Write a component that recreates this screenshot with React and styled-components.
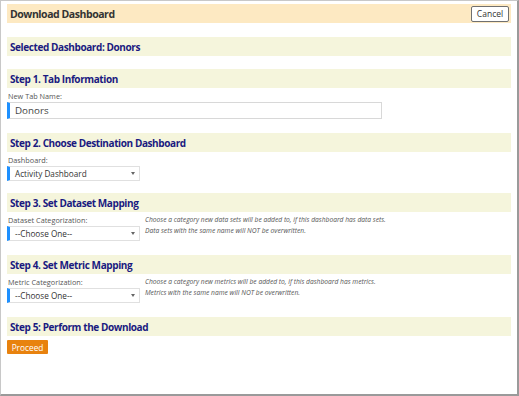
import React from 'react';
import styled, { createGlobalStyle } from 'styled-components';

const GlobalStyle = createGlobalStyle`
	html, body {
		margin: 0;
		padding: 0;
		background: #ffffff;
	}
	body {
		font-family: "Open Sans", "Noto Sans", sans-serif;
	}
`;

const Dialog = styled.div`
	box-sizing: border-box;
	width: 519px;
	height: 396px;
	padding: 3px 6px 0 6px;
	border: 1px solid #c8c8c8;
	border-right: 2px solid #9a9a9a;
	border-bottom: 2px solid #9a9a9a;
	background: #ffffff;
	display: flex;
	flex-direction: column;
`;

const Header = styled.div`
	height: 19px;
	background: #fde9c2;
	display: flex;
	align-items: center;
	justify-content: space-between;
	padding: 0 2px 0 3px;
`;

const Title = styled.div`
	font-size: 10.5px;
	font-weight: 700;
	letter-spacing: -0.45px;
	color: #333333;
`;

const CancelButton = styled.button`
	box-sizing: border-box;
	height: 16px;
	width: 38px;
	padding: 0;
	border: 1px solid #707070;
	border-radius: 2px;
	background: #ffffff;
	font-family: inherit;
	font-size: 8.5px;
	color: #333333;
`;

const Band = styled.div`
	height: 19px;
	margin-top: ${p => p.gap}px;
	background: #f5f5dc;
	display: flex;
	align-items: center;
	padding-left: 3px;
	font-size: 10px;
	font-weight: 700;
	letter-spacing: -0.4px;
	color: #1a1a80;
`;

const Label = styled.div`
	margin-top: 3px;
	font-size: 7.3px;
	color: #555555;
	line-height: 10px;
	padding-left: 1px;
`;

const TextInput = styled.input`
	box-sizing: border-box;
	width: 375px;
	height: 17px;
	margin-top: 1px;
	border: 1px solid #d8d8d8;
	border-left: 3px solid #1e90ff;
	padding: 0 5px;
	font-family: inherit;
	font-size: 9.8px;
	color: #444444;
	outline: none;
`;

const FieldRow = styled.div`
	display: flex;
	align-items: flex-start;
	gap: 5px;
`;

const FieldColumn = styled.div`
	display: flex;
	flex-direction: column;
	gap: 1px;
`;

const Select = styled.div`
	box-sizing: border-box;
	width: 133px;
	height: 15px;
	border: 1px solid #e0e0e0;
	border-left: 3px solid #1e90ff;
	display: flex;
	align-items: center;
	justify-content: space-between;
	padding: 0 4px 0 5px;
	font-size: 8.2px;
	color: #333333;
`;

const Caret = styled.span`
	width: 0;
	height: 0;
	border-left: 2.5px solid transparent;
	border-right: 2.5px solid transparent;
	border-top: 3px solid #666666;
`;

const Hint = styled.div`
	margin-top: 2px;
	font-size: 6.7px;
	font-style: italic;
	color: #555555;
	line-height: 11px;
`;

const ProceedButton = styled.button`
	align-self: flex-start;
	margin-top: 4px;
	height: 14px;
	width: 41px;
	padding: 0;
	border: none;
	border-radius: 1px;
	background: #e8820e;
	color: #ffffff;
	font-family: inherit;
	font-size: 8.3px;
`;

function SelectField({ label, value }) {
	return (
		<FieldColumn>
			<Label>{label}</Label>
			<Select>
				{value}
				<Caret />
			</Select>
		</FieldColumn>
	);
}

export default function App() {
	return (
		<Dialog>
			<GlobalStyle />
			<Header>
				<Title>Download Dashboard</Title>
				<CancelButton>Cancel</CancelButton>
			</Header>

			<Band gap={14}>Selected Dashboard: Donors</Band>

			<Band gap={13}>Step 1. Tab Information</Band>
			<Label>New Tab Name:</Label>
			<TextInput defaultValue="Donors" />

			<Band gap={14}>Step 2. Choose Destination Dashboard</Band>
			<SelectField label="Dashboard:" value="Activity Dashboard" />

			<Band gap={12}>Step 3. Set Dataset Mapping</Band>
			<FieldRow>
				<SelectField label="Dataset Categorization:" value="--Choose One--" />
				<Hint>
					Choose a category new data sets will be added to, if this dashboard has data sets.<br />
					Data sets with the same name will NOT be overwritten.
				</Hint>
			</FieldRow>

			<Band gap={14}>Step 4. Set Metric Mapping</Band>
			<FieldRow>
				<SelectField label="Metric Categorization:" value="--Choose One--" />
				<Hint>
					Choose a category new metrics will be added to, if this dashboard has metrics.<br />
					Metrics with the same name will NOT be overwritten.
				</Hint>
			</FieldRow>

			<Band gap={14}>Step 5: Perform the Download</Band>
			<ProceedButton>Proceed</ProceedButton>
		</Dialog>
	);
}
